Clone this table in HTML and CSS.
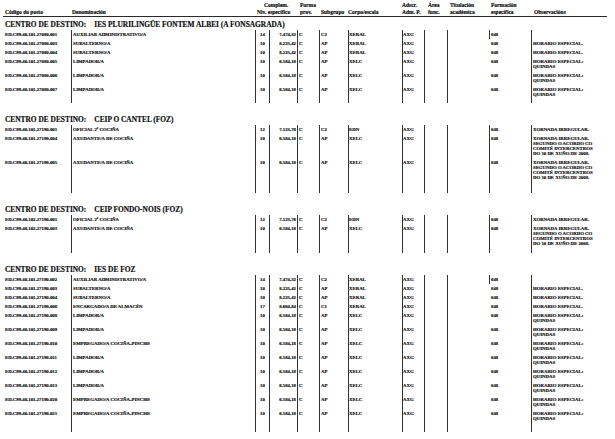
FILE: index.html
```html
<!DOCTYPE html>
<html lang="gl">
<head>
<meta charset="utf-8">
<title>Postos</title>
<link rel="stylesheet" href="styles.css">
</head>
<body>
<div class="page">
  <div class="head">
    <div class="hc h1"><div>&nbsp;</div><div>Código do posto</div></div>
    <div class="hc h2"><div>&nbsp;</div><div>Denominación</div></div>
    <div class="hc h34"><div class="hcomp">Complem.</div><div class="hniv">Nlv. específico</div></div>
    <div class="hc h5"><div>Forma</div><div>prov.</div></div>
    <div class="hc h6"><div>&nbsp;</div><div>Subgrupo</div></div>
    <div class="hc h7"><div>&nbsp;</div><div>Corpo/escala</div></div>
    <div class="hc h8"><div>Adscr.</div><div>Adm. P.</div></div>
    <div class="hc h9"><div>Área</div><div>func.</div></div>
    <div class="hc h10"><div>Titulación</div><div>académica</div></div>
    <div class="hc h11"><div>Formación</div><div>específica</div></div>
    <div class="hc h12"><div>&nbsp;</div><div>Observacións</div></div>
  </div>

  <div class="title first">CENTRO DE DESTINO:<span class="tname">IES PLURILINGÜE FONTEM ALBEI (A FONSAGRADA)</span></div>
  <div class="sec nf s1">
    <div class="row"><div class="c c1">ED.C99.40.101.27080.001</div><div class="c c2">AUXILIAR ADMINISTRATIVO/A</div><div class="c c3">14</div><div class="c c4">7.474,32</div><div class="c c5">C</div><div class="c c6">C2</div><div class="c c7">XERAL</div><div class="c c8">AXG</div><div class="c c9"></div><div class="c c10"></div><div class="c c11">648</div><div class="c c12"></div></div>
    <div class="row"><div class="c c1">ED.C99.40.101.27080.003</div><div class="c c2">SUBALTERNO/A</div><div class="c c3">10</div><div class="c c4">8.225,42</div><div class="c c5">C</div><div class="c c6">AP</div><div class="c c7">XERAL</div><div class="c c8">AXG</div><div class="c c9"></div><div class="c c10"></div><div class="c c11">648</div><div class="c c12">HORARIO ESPECIAL.</div></div>
    <div class="row"><div class="c c1">ED.C99.40.101.27080.004</div><div class="c c2">SUBALTERNO/A</div><div class="c c3">10</div><div class="c c4">8.225,42</div><div class="c c5">C</div><div class="c c6">AP</div><div class="c c7">XERAL</div><div class="c c8">AXG</div><div class="c c9"></div><div class="c c10"></div><div class="c c11">648</div><div class="c c12">HORARIO ESPECIAL.</div></div>
    <div class="row"><div class="c c1">ED.C99.40.101.27080.005</div><div class="c c2">LIMPADOR/A</div><div class="c c3">10</div><div class="c c4">6.584,18</div><div class="c c5">C</div><div class="c c6">AP</div><div class="c c7">XELC</div><div class="c c8">AXG</div><div class="c c9"></div><div class="c c10"></div><div class="c c11">648</div><div class="c c12">HORARIO ESPECIAL:<br>QUINDAS</div></div>
    <div class="row"><div class="c c1">ED.C99.40.101.27080.006</div><div class="c c2">LIMPADOR/A</div><div class="c c3">10</div><div class="c c4">6.584,18</div><div class="c c5">C</div><div class="c c6">AP</div><div class="c c7">XELC</div><div class="c c8">AXG</div><div class="c c9"></div><div class="c c10"></div><div class="c c11">648</div><div class="c c12">HORARIO ESPECIAL:<br>QUINDAS</div></div>
    <div class="row last"><div class="c c1">ED.C99.40.101.27080.007</div><div class="c c2">LIMPADOR/A</div><div class="c c3">10</div><div class="c c4">6.584,18</div><div class="c c5">C</div><div class="c c6">AP</div><div class="c c7">XELC</div><div class="c c8">AXG</div><div class="c c9"></div><div class="c c10"></div><div class="c c11">648</div><div class="c c12">HORARIO ESPECIAL:<br>QUINDAS</div></div>
  </div>

  <div class="title">CENTRO DE DESTINO:<span class="tname">CEIP O CANTEL (FOZ)</span></div>
  <div class="sec s2">
    <div class="row"><div class="c c1">ED.C99.40.101.27190.001</div><div class="c c2">OFICIAL 2ª COCIÑA</div><div class="c c3">12</div><div class="c c4">7.123,76</div><div class="c c5">C</div><div class="c c6">C2</div><div class="c c7">EDN</div><div class="c c8">AXG</div><div class="c c9"></div><div class="c c10"></div><div class="c c11">648</div><div class="c c12">XORNADA IRREGULAR.</div></div>
    <div class="row"><div class="c c1">ED.C99.40.101.27190.004</div><div class="c c2">AXUDANTE/A DE COCIÑA</div><div class="c c3">10</div><div class="c c4">6.584,18</div><div class="c c5">C</div><div class="c c6">AP</div><div class="c c7">XELC</div><div class="c c8">AXG</div><div class="c c9"></div><div class="c c10"></div><div class="c c11">648</div><div class="c c12">XORNADA IRREGULAR,<br>SEGUNDO O ACORDO CO<br>COMITÉ INTERCENTROS<br>DO 10 DE XUÑO DE 2008.</div></div>
    <div class="row last"><div class="c c1">ED.C99.40.101.27190.005</div><div class="c c2">AXUDANTE/A DE COCIÑA</div><div class="c c3">10</div><div class="c c4">6.584,18</div><div class="c c5">C</div><div class="c c6">AP</div><div class="c c7">XELC</div><div class="c c8">AXG</div><div class="c c9"></div><div class="c c10"></div><div class="c c11">648</div><div class="c c12">XORNADA IRREGULAR,<br>SEGUNDO O ACORDO CO<br>COMITÉ INTERCENTROS<br>DO 10 DE XUÑO DE 2008.</div></div>
  </div>

  <div class="title">CENTRO DE DESTINO:<span class="tname">CEIP FONDO-NOIS (FOZ)</span></div>
  <div class="sec s3">
    <div class="row"><div class="c c1">ED.C99.40.102.27190.001</div><div class="c c2">OFICIAL 2ª COCIÑA</div><div class="c c3">12</div><div class="c c4">7.123,76</div><div class="c c5">C</div><div class="c c6">C2</div><div class="c c7">EDN</div><div class="c c8">AXG</div><div class="c c9"></div><div class="c c10"></div><div class="c c11">648</div><div class="c c12">XORNADA IRREGULAR.</div></div>
    <div class="row last"><div class="c c1">ED.C99.40.102.27190.003</div><div class="c c2">AXUDANTE/A DE COCIÑA</div><div class="c c3">10</div><div class="c c4">6.584,18</div><div class="c c5">C</div><div class="c c6">AP</div><div class="c c7">XELC</div><div class="c c8">AXG</div><div class="c c9"></div><div class="c c10"></div><div class="c c11">648</div><div class="c c12">XORNADA IRREGULAR,<br>SEGUNDO O ACORDO CO<br>COMITÉ INTERCENTROS<br>DO 10 DE XUÑO DE 2008.</div></div>
  </div>

  <div class="title">CENTRO DE DESTINO:<span class="tname">IES DE FOZ</span></div>
  <div class="sec nf s4">
    <div class="row"><div class="c c1">ED.C99.40.101.27190.002</div><div class="c c2">AUXILIAR ADMINISTRATIVO/A</div><div class="c c3">14</div><div class="c c4">7.474,32</div><div class="c c5">C</div><div class="c c6">C2</div><div class="c c7">XERAL</div><div class="c c8">AXG</div><div class="c c9"></div><div class="c c10"></div><div class="c c11">648</div><div class="c c12"></div></div>
    <div class="row"><div class="c c1">ED.C99.40.101.27190.003</div><div class="c c2">SUBALTERNO/A</div><div class="c c3">10</div><div class="c c4">8.225,42</div><div class="c c5">C</div><div class="c c6">AP</div><div class="c c7">XERAL</div><div class="c c8">AXG</div><div class="c c9"></div><div class="c c10"></div><div class="c c11">648</div><div class="c c12">HORARIO ESPECIAL.</div></div>
    <div class="row"><div class="c c1">ED.C99.40.101.27190.004</div><div class="c c2">SUBALTERNO/A</div><div class="c c3">10</div><div class="c c4">8.225,42</div><div class="c c5">C</div><div class="c c6">AP</div><div class="c c7">XERAL</div><div class="c c8">AXG</div><div class="c c9"></div><div class="c c10"></div><div class="c c11">648</div><div class="c c12">HORARIO ESPECIAL.</div></div>
    <div class="row"><div class="c c1">ED.C99.40.101.27190.006</div><div class="c c2">ENCARGADO/A DE ALMACÉN</div><div class="c c3">17</div><div class="c c4">8.664,84</div><div class="c c5">C</div><div class="c c6">C1</div><div class="c c7">XERAL</div><div class="c c8">AXG</div><div class="c c9"></div><div class="c c10"></div><div class="c c11">648</div><div class="c c12">HORARIO ESPECIAL.</div></div>
    <div class="row"><div class="c c1">ED.C99.40.101.27190.008</div><div class="c c2">LIMPADOR/A</div><div class="c c3">10</div><div class="c c4">6.584,18</div><div class="c c5">C</div><div class="c c6">AP</div><div class="c c7">XELC</div><div class="c c8">AXG</div><div class="c c9"></div><div class="c c10"></div><div class="c c11">648</div><div class="c c12">HORARIO ESPECIAL:<br>QUINDAS</div></div>
    <div class="row"><div class="c c1">ED.C99.40.101.27190.009</div><div class="c c2">LIMPADOR/A</div><div class="c c3">10</div><div class="c c4">6.584,18</div><div class="c c5">C</div><div class="c c6">AP</div><div class="c c7">XELC</div><div class="c c8">AXG</div><div class="c c9"></div><div class="c c10"></div><div class="c c11">648</div><div class="c c12">HORARIO ESPECIAL:<br>QUINDAS</div></div>
    <div class="row"><div class="c c1">ED.C99.40.101.27190.010</div><div class="c c2">EMPREGADO/A COCIÑA-PINCHE</div><div class="c c3">10</div><div class="c c4">6.584,18</div><div class="c c5">C</div><div class="c c6">AP</div><div class="c c7">XELC</div><div class="c c8">AXG</div><div class="c c9"></div><div class="c c10"></div><div class="c c11">648</div><div class="c c12">HORARIO ESPECIAL:<br>QUINDAS</div></div>
    <div class="row"><div class="c c1">ED.C99.40.101.27190.011</div><div class="c c2">LIMPADOR/A</div><div class="c c3">10</div><div class="c c4">6.584,18</div><div class="c c5">C</div><div class="c c6">AP</div><div class="c c7">XELC</div><div class="c c8">AXG</div><div class="c c9"></div><div class="c c10"></div><div class="c c11">648</div><div class="c c12">HORARIO ESPECIAL:<br>QUINDAS</div></div>
    <div class="row"><div class="c c1">ED.C99.40.101.27190.012</div><div class="c c2">LIMPADOR/A</div><div class="c c3">10</div><div class="c c4">6.584,18</div><div class="c c5">C</div><div class="c c6">AP</div><div class="c c7">XELC</div><div class="c c8">AXG</div><div class="c c9"></div><div class="c c10"></div><div class="c c11">648</div><div class="c c12">HORARIO ESPECIAL:<br>QUINDAS</div></div>
    <div class="row"><div class="c c1">ED.C99.40.101.27190.013</div><div class="c c2">LIMPADOR/A</div><div class="c c3">10</div><div class="c c4">6.584,18</div><div class="c c5">C</div><div class="c c6">AP</div><div class="c c7">XELC</div><div class="c c8">AXG</div><div class="c c9"></div><div class="c c10"></div><div class="c c11">648</div><div class="c c12">HORARIO ESPECIAL:<br>QUINDAS</div></div>
    <div class="row"><div class="c c1">ED.C99.40.101.27190.020</div><div class="c c2">EMPREGADO/A COCIÑA-PINCHE</div><div class="c c3">10</div><div class="c c4">6.584,18</div><div class="c c5">C</div><div class="c c6">AP</div><div class="c c7">XELC</div><div class="c c8">AXG</div><div class="c c9"></div><div class="c c10"></div><div class="c c11">648</div><div class="c c12">HORARIO ESPECIAL:<br>QUINDAS</div></div>
    <div class="row last"><div class="c c1">ED.C99.40.101.27190.021</div><div class="c c2">EMPREGADO/A COCIÑA-PINCHE</div><div class="c c3">10</div><div class="c c4">6.584,18</div><div class="c c5">C</div><div class="c c6">AP</div><div class="c c7">XELC</div><div class="c c8">AXG</div><div class="c c9"></div><div class="c c10"></div><div class="c c11">648</div><div class="c c12">HORARIO ESPECIAL:<br>QUINDAS</div></div>
  </div>
</div>
</body>
</html>
```

FILE: styles.css
```css
html, body {
  margin: 0;
  padding: 0;
  background: #ffffff;
}

body {
  font-family: "Liberation Serif", "Times New Roman", serif;
  color: #0a0a0a;
}

.page {
  width: 604px;
  padding: 2px 0 0 3px;
}

.head,
.row {
  display: grid;
  grid-template-columns: 68px 184px 14px 28px 22px 29px 54px 22px 23px 42px 42px 76px;
}

.head {
  border-bottom: 1px solid #2a2a2a;
  font-size: 5.5px;
  font-weight: bold;
  line-height: 7px;
  -webkit-text-stroke: 0.15px #000;
}

.hc {
  white-space: nowrap;
}

.h1 { padding-left: 2px; }
.h2 { padding-left: 1px; }
.h34 { grid-column: span 2; }
.hcomp { padding-left: 9px; }
.hniv { padding-left: 2px; }
.h5 { padding-left: 3px; }
.h6 { padding-left: 2px; }
.h7 { padding-left: 0; }
.h8 { padding-left: 0; }
.h9 { padding-left: 4px; }
.h10 { padding-left: 3px; }
.h11 { padding-left: 2px; }
.h12 { padding-left: 3px; }

.title {
  font-size: 7.4px;
  font-weight: bold;
  line-height: 10px;
  padding-left: 2px;
  margin-top: 12px;
  white-space: nowrap;
  -webkit-text-stroke: 0.15px #000;
}

.title.first {
  margin-top: 3px;
}

.tname {
  margin-left: 8px;
}

.row {
  font-size: 4.8px;
  font-weight: bold;
  line-height: 5px;
  -webkit-text-stroke: 0.15px #000;
}

.c {
  padding: 2px 0;
  border-left: 1px solid #333333;
  white-space: nowrap;
}

.c1 {
  border-left: none;
  padding-left: 2px;
}

.c2 { padding-left: 1px; }
.c3 { text-align: center; }
.c4 { text-align: right; padding-right: 1px; }
.c5 { padding-left: 1px; }
.c6 { padding-left: 1px; }
.c11 { padding-left: 1px; }
.c12 { padding-left: 1px; }

.sec.nf .row + .row .c11 {
  border-left-color: transparent;
}

.s1 .row.last .c { padding-bottom: 6px; }
.s2 .row.last .c { padding-bottom: 13px; }
.s3 .row.last .c { padding-bottom: 7px; }
.s4 .row.last .c { padding-bottom: 11px; }
```
